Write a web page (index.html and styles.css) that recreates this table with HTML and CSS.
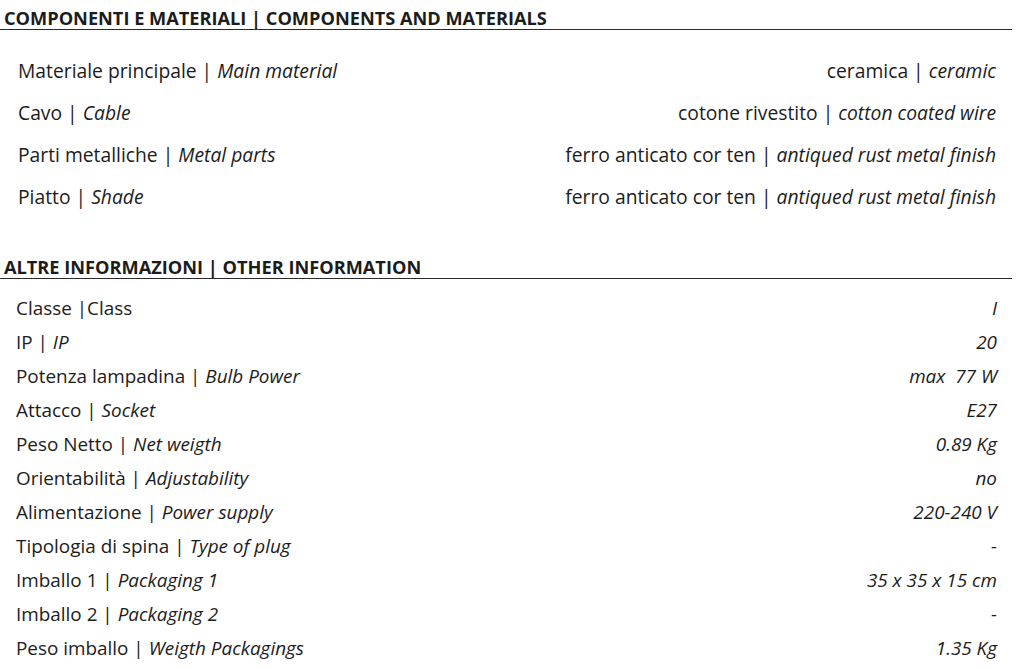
FILE: index.html
```html
<!DOCTYPE html>
<html lang="it">
<head>
<meta charset="utf-8">
<title>Componenti e materiali</title>
<link rel="stylesheet" href="styles.css">
</head>
<body>
<section class="block block-materials">
  <h2 class="heading">COMPONENTI E MATERIALI | COMPONENTS AND MATERIALS</h2>
  <ul class="rows rows-wide">
    <li class="row"><span class="label">Materiale principale | <em>Main material</em></span><span class="value">ceramica | <em>ceramic</em></span></li>
    <li class="row"><span class="label">Cavo | <em>Cable</em></span><span class="value">cotone rivestito | <em>cotton coated wire</em></span></li>
    <li class="row"><span class="label">Parti metalliche | <em>Metal parts</em></span><span class="value">ferro anticato cor ten | <em>antiqued rust metal finish</em></span></li>
    <li class="row"><span class="label">Piatto | <em>Shade</em></span><span class="value">ferro anticato cor ten | <em>antiqued rust metal finish</em></span></li>
  </ul>
</section>
<section class="block block-info">
  <h2 class="heading">ALTRE INFORMAZIONI | OTHER INFORMATION</h2>
  <ul class="rows rows-tight">
    <li class="row"><span class="label">Classe |Class</span><span class="value"><em>I</em></span></li>
    <li class="row"><span class="label">IP | <em>IP</em></span><span class="value"><em>20</em></span></li>
    <li class="row"><span class="label">Potenza lampadina | <em>Bulb Power</em></span><span class="value"><em>max&nbsp; 77 W</em></span></li>
    <li class="row"><span class="label">Attacco | <em>Socket</em></span><span class="value"><em>E27</em></span></li>
    <li class="row"><span class="label">Peso Netto | <em>Net weigth</em></span><span class="value"><em>0.89 Kg</em></span></li>
    <li class="row"><span class="label">Orientabilità | <em>Adjustability</em></span><span class="value"><em>no</em></span></li>
    <li class="row"><span class="label">Alimentazione | <em>Power supply</em></span><span class="value"><em>220-240 V</em></span></li>
    <li class="row"><span class="label">Tipologia di spina | <em>Type of plug</em></span><span class="value"><em>-</em></span></li>
    <li class="row"><span class="label">Imballo 1 | <em>Packaging 1</em></span><span class="value"><em>35 x 35 x 15 cm</em></span></li>
    <li class="row"><span class="label">Imballo 2 | <em>Packaging 2</em></span><span class="value"><em>-</em></span></li>
    <li class="row"><span class="label">Peso imballo | <em>Weigth Packagings</em></span><span class="value"><em>1.35 Kg</em></span></li>
  </ul>
</section>
</body>
</html>
```
FILE: styles.css
```css
html, body {
  margin: 0;
  padding: 0;
  background: #ffffff;
}
body {
  width: 1020px;
  height: 669px;
  overflow: hidden;
  font-family: "Open Sans", "Noto Sans", sans-serif;
  color: #1c1c1c;
}
.block {
  width: 1012px;
}
.heading {
  margin: 0;
  font-size: 18.2px;
  font-weight: 700;
  line-height: 20px;
  padding: 8px 0 1px 4px;
  border-bottom: 1.5px solid #2a2a2a;
}
.rows {
  list-style: none;
  margin: 0;
  padding: 0 16px 0 18px;
}
.row {
  display: flex;
  justify-content: space-between;
  align-items: baseline;
  font-size: 19.3px;
}
.row em {
  font-style: italic;
}
.rows-wide {
  padding-top: 29px;
}
.rows-wide .row {
  height: 42px;
  line-height: 24px;
}
.block-info {
  margin-top: 21px;
}
.block-info .heading {
  padding-top: 9px;
}
.rows-tight {
  padding: 18px 15px 0 16px;
}
.rows-tight .row {
  height: 34px;
  line-height: 22px;
  font-size: 18.9px;
}
```
